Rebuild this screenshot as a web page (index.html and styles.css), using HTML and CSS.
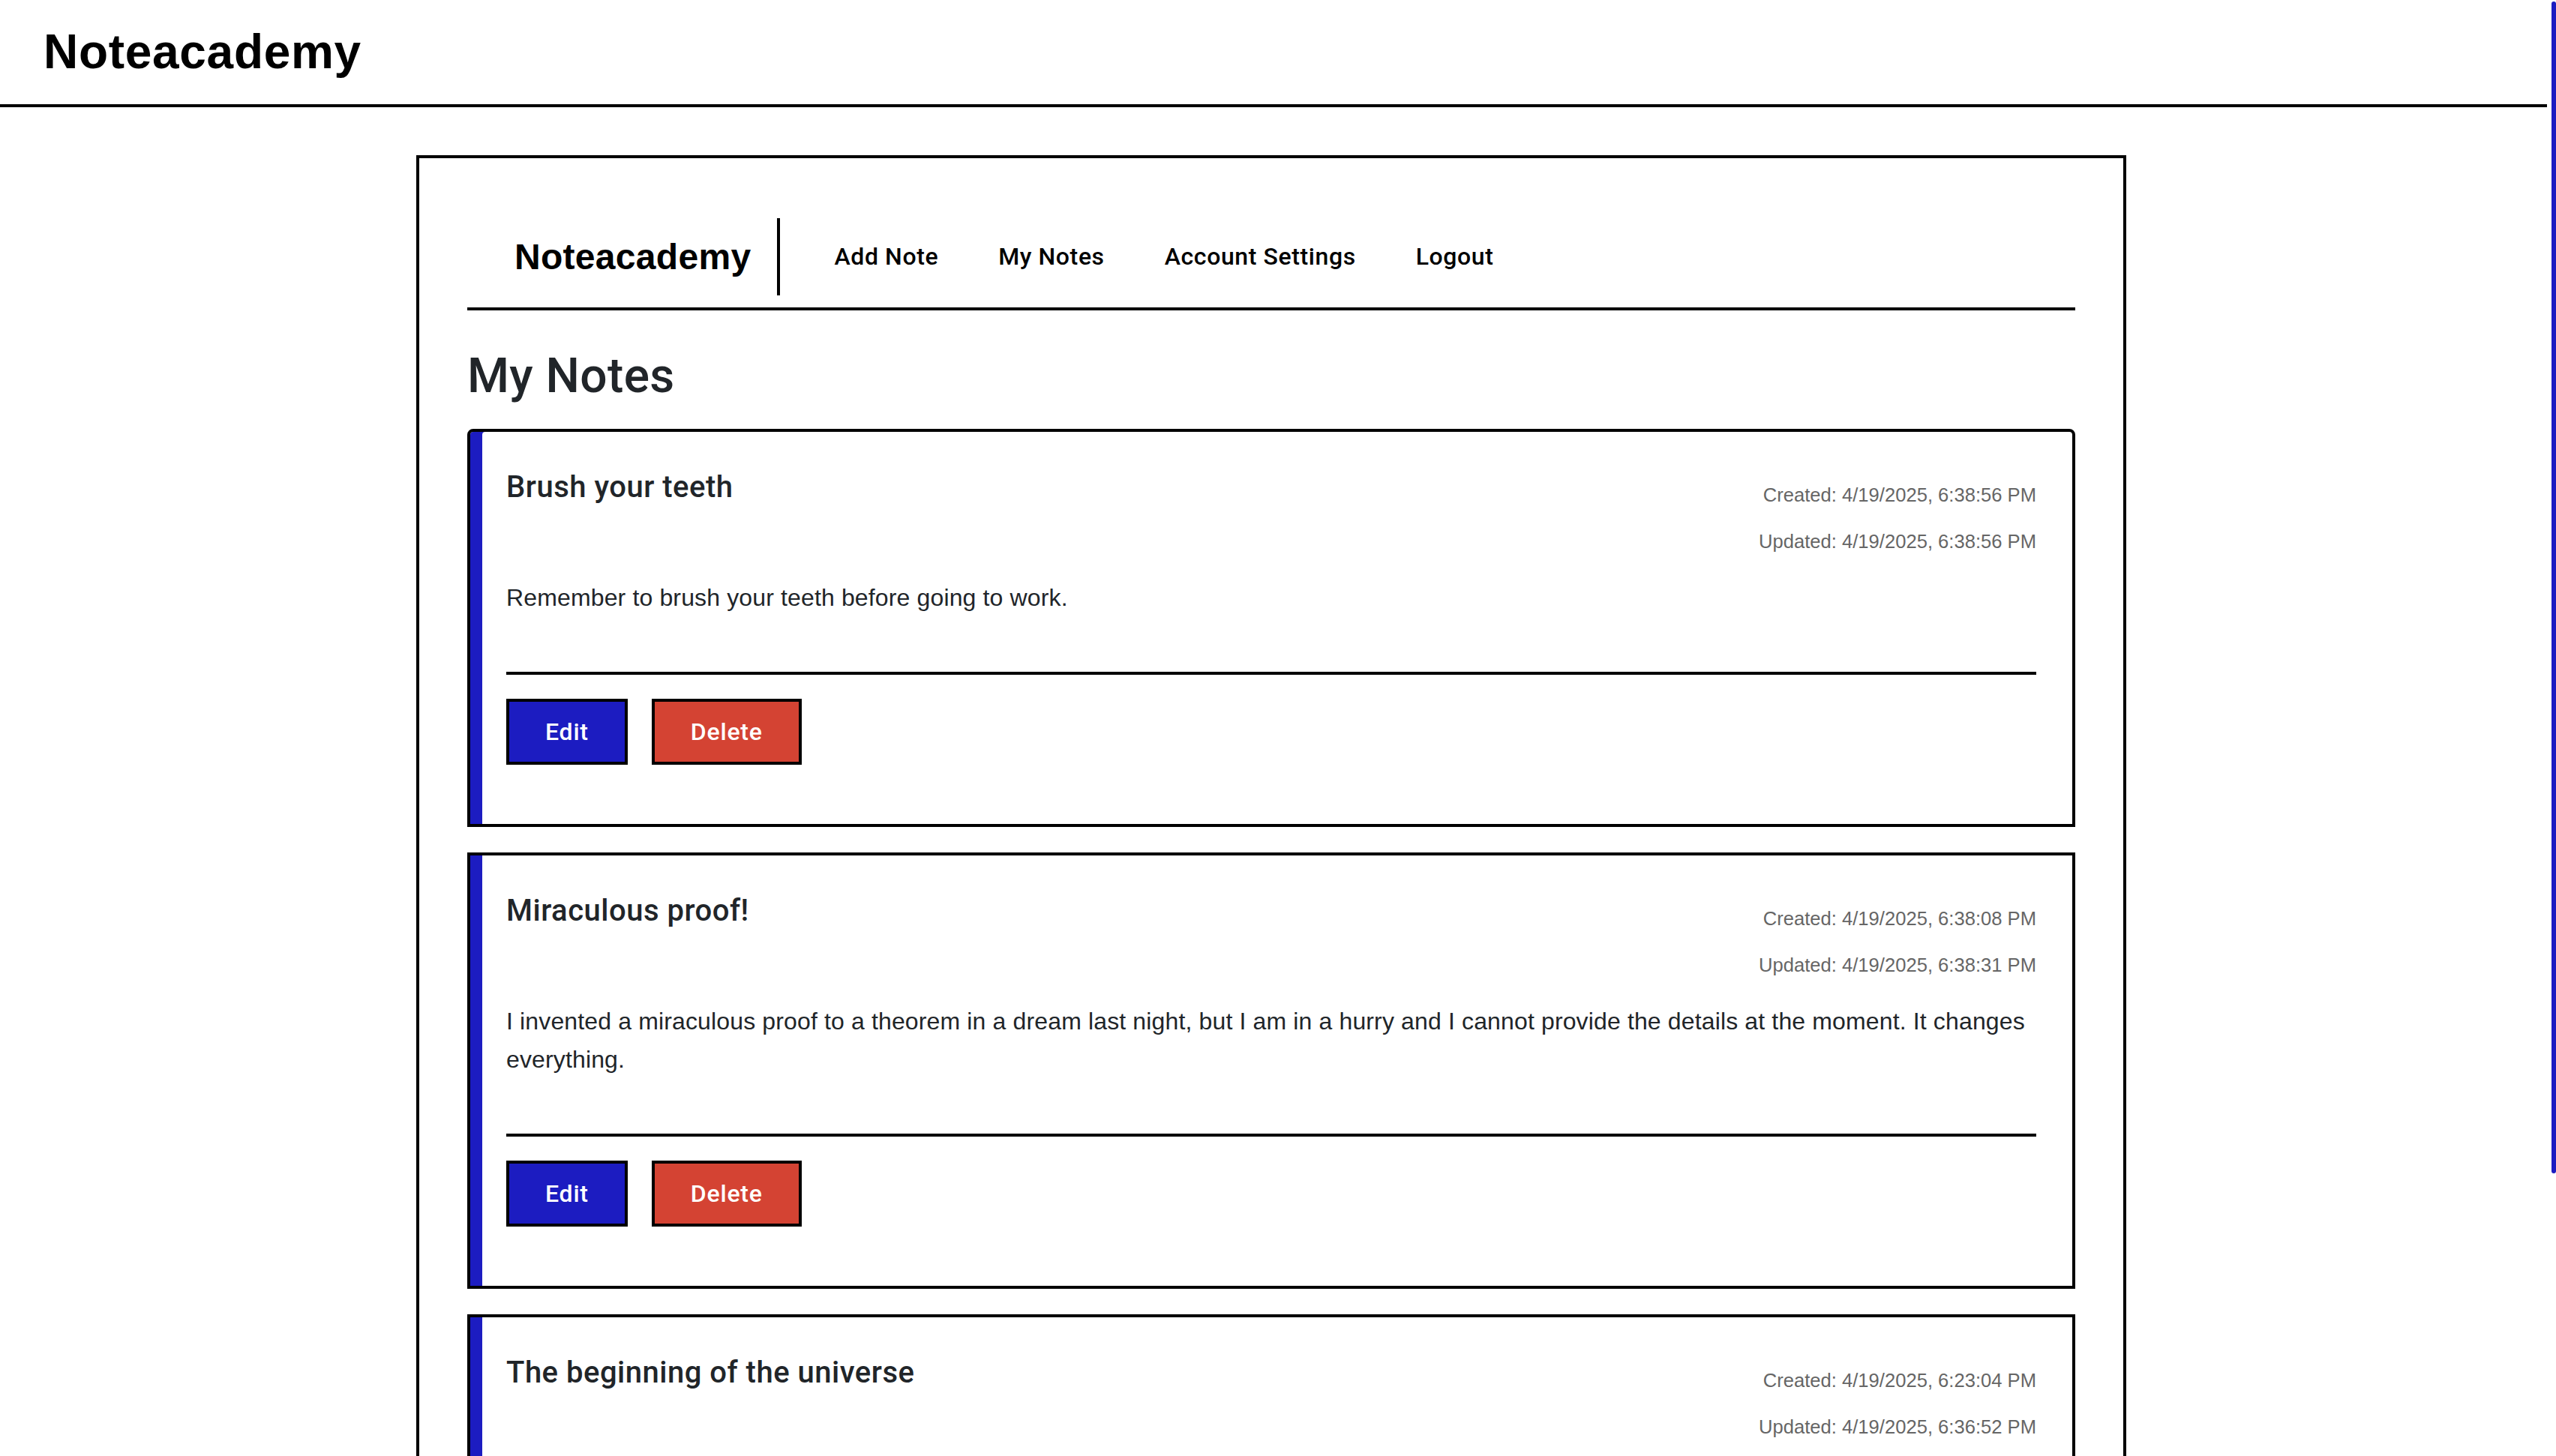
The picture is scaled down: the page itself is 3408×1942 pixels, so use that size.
FILE: index.html
```html
<!DOCTYPE html>
<html lang="en">
<head>
<meta charset="utf-8">
<title>Noteacademy - My Notes</title>
<link rel="stylesheet" href="styles.css">
</head>
<body>
<header class="site-header">
  <h1 class="site-title">Noteacademy</h1>
</header>

<main class="container">
  <nav class="nav">
    <a class="nav-brand" href="#">Noteacademy</a>
    <ul class="nav-links">
      <li><a class="nav-link" href="#">Add Note</a></li>
      <li><a class="nav-link" href="#">My Notes</a></li>
      <li><a class="nav-link" href="#">Account Settings</a></li>
      <li><a class="nav-link" href="#">Logout</a></li>
    </ul>
  </nav>

  <h2 class="page-title">My Notes</h2>

  <ul class="note-list">
    <li class="note">
      <div class="note-head">
        <h5 class="note-title">Brush your teeth</h5>
        <div class="note-dates">
          <small class="note-date">Created: 4/19/2025, 6:38:56 PM</small>
          <small class="note-date">Updated: 4/19/2025, 6:38:56 PM</small>
        </div>
      </div>
      <p class="note-body">Remember to brush your teeth before going to work.</p>
      <hr class="note-rule">
      <div class="note-actions">
        <button class="btn btn-edit">Edit</button>
        <button class="btn btn-delete">Delete</button>
      </div>
    </li>
    <li class="note">
      <div class="note-head">
        <h5 class="note-title">Miraculous proof!</h5>
        <div class="note-dates">
          <small class="note-date">Created: 4/19/2025, 6:38:08 PM</small>
          <small class="note-date">Updated: 4/19/2025, 6:38:31 PM</small>
        </div>
      </div>
      <p class="note-body">I invented a miraculous proof to a theorem in a dream last night, but I am in a hurry and I cannot provide the details at the moment. It changes everything.</p>
      <hr class="note-rule">
      <div class="note-actions">
        <button class="btn btn-edit">Edit</button>
        <button class="btn btn-delete">Delete</button>
      </div>
    </li>
    <li class="note">
      <div class="note-head">
        <h5 class="note-title">The beginning of the universe</h5>
        <div class="note-dates">
          <small class="note-date">Created: 4/19/2025, 6:23:04 PM</small>
          <small class="note-date">Updated: 4/19/2025, 6:36:52 PM</small>
        </div>
      </div>
      <p class="note-body">Notes about the beginning of the universe.</p>
      <hr class="note-rule">
      <div class="note-actions">
        <button class="btn btn-edit">Edit</button>
        <button class="btn btn-delete">Delete</button>
      </div>
    </li>
  </ul>
</main>

<div class="scroll-thumb" aria-hidden="true"></div>
</body>
</html>
```

FILE: styles.css
```css
* {
  box-sizing: border-box;
}

html,
body {
  margin: 0;
  background: #fff;
}

body {
  padding: 0 18px 64px 0;
  font-family: "Liberation Sans", Arial, sans-serif;
  font-size: 32px;
  color: #212529;
}

/* top header */
.site-header {
  margin-right: -6px;
  padding: 31px 0 31px 58px;
  border-bottom: 4px solid #000;
}

.site-title {
  margin: 0;
  font-size: 64px;
  line-height: 76.8px;
  font-weight: 700;
  letter-spacing: 0.7px;
  color: #000;
}

/* main container */
.container {
  width: 2280px;
  margin: 64px auto 0;
  border: 4px solid #000;
  padding: 64px 64px 64px;
}

/* nav */
.nav {
  display: flex;
  align-items: center;
  padding: 16px 0;
  border-bottom: 4px solid #000;
}

.nav-brand {
  display: flex;
  align-items: center;
  height: 103px;
  padding: 0 35px 0 63px;
  border-right: 4px solid #000;
  font-size: 48px;
  font-weight: 700;
  letter-spacing: 0.3px;
  color: #000;
  text-decoration: none;
}

.nav-links {
  display: flex;
  align-items: center;
  list-style: none;
  margin: 0 0 0 32px;
  padding: 0;
}

.nav-link {
  display: block;
  padding: 0 40px;
  font-family: Roboto, "Liberation Sans", sans-serif;
  font-weight: 500;
  font-size: 32px;
  letter-spacing: 0.6px;
  line-height: 48px;
  color: #000;
  text-decoration: none;
}

/* page title */
.page-title {
  margin: 50px 0 31px;
  font-family: Roboto, "Liberation Sans", sans-serif;
  font-size: 64px;
  font-weight: 500;
  letter-spacing: 0.4px;
  line-height: 76.8px;
  color: #212529;
}

/* notes */
.note-list {
  list-style: none;
  margin: 0;
  padding: 0;
  display: flex;
  flex-direction: column;
  gap: 34px;
}

.note {
  border: 4px solid #000;
  box-shadow: inset 16px 0 0 #1c1cc1;
  padding: 48px;
}

.note:first-child {
  border-radius: 8px 8px 0 0;
}

.note-head {
  display: flex;
  justify-content: space-between;
  align-items: flex-start;
}

.note-title {
  margin: 2px 0 0;
  font-family: Roboto, "Liberation Sans", sans-serif;
  font-size: 40px;
  font-weight: 500;
  letter-spacing: 0.5px;
  line-height: 48px;
  color: #212529;
}

.note-dates {
  display: flex;
  flex-direction: column;
  align-items: flex-end;
  gap: 24px;
  padding-top: 17px;
}

.note-date {
  display: block;
  font-size: 25.6px;
  line-height: 38px;
  color: #666;
}

.note-body {
  margin: 31px 0 0;
  font-size: 32px;
  line-height: 51.2px;
  letter-spacing: 0.14px;
  color: #212529;
}

.note-rule {
  margin: 73px 0 32px;
  border: 0;
  border-top: 4px solid #000;
  height: 0;
}

.note-actions {
  display: flex;
  gap: 32px;
  margin-bottom: 31px;
}

.btn {
  padding: 16px 48px;
  border: 4px solid #000;
  border-radius: 0;
  font-family: Roboto, "Liberation Sans", sans-serif;
  font-size: 32px;
  font-weight: 500;
  letter-spacing: 0.8px;
  line-height: 48px;
  color: #fff;
  cursor: pointer;
}

.btn-edit {
  background: #1c1cc1;
}

.btn-delete {
  background: #d44333;
}

/* scrollbar thumb drawn over the page edge */
.scroll-thumb {
  position: fixed;
  top: 2px;
  right: 0;
  width: 6px;
  height: 1563px;
  border-radius: 3px;
  background: #1c1cc1;
}
```
